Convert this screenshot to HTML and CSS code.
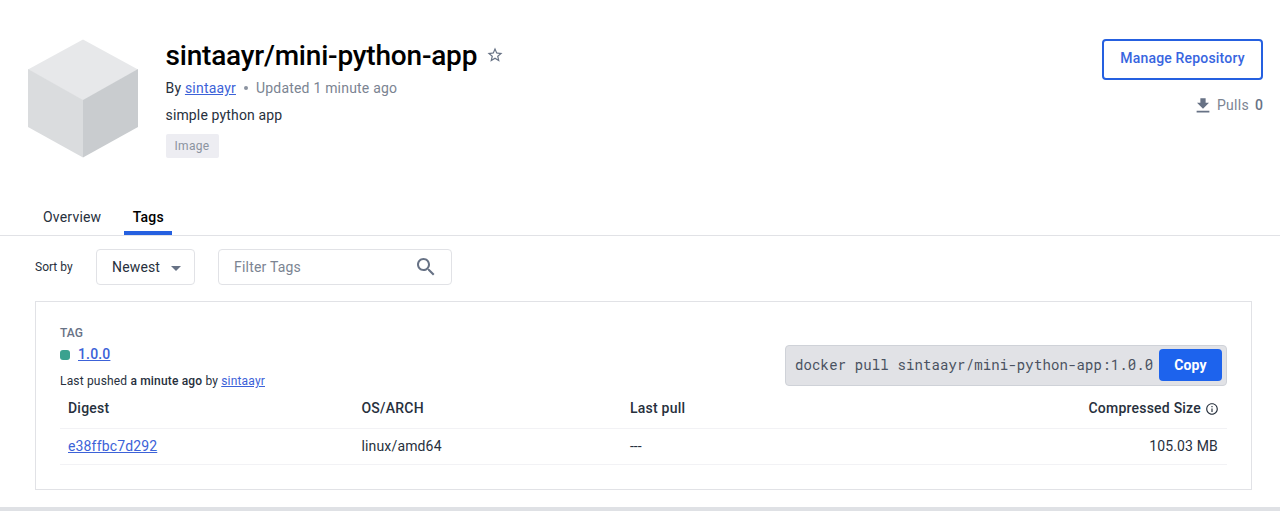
FILE: index.html
```html
<!DOCTYPE html>
<html lang="en">
<head>
<meta charset="utf-8">
<title>sintaayr/mini-python-app</title>
<link rel="stylesheet" href="styles.css">
</head>
<body>
<div class="page">
  <header class="repo">
    <svg class="cube" width="112" height="120" viewBox="0 0 112 120" aria-hidden="true">
      <path fill="#e7e8ea" d="M56 .5 111 30.500 56 61.500 1 30.500z"/>
      <path fill="#dadcde" d="M1 30 56 61V118.500L1 88z"/>
      <path fill="#c9cccf" d="M111 30 56 61V118.500L111 88z"/>
    </svg>
    <div class="info">
      <div class="title-row">
        <h1 class="title">sintaayr/mini-python-app</h1>
        <svg class="star" width="18" height="18" viewBox="0 0 24 24" aria-hidden="true"><path fill="#677285" d="M22 9.240l-7.190-.62L12 2 9.190 8.630 2 9.240l5.460 4.730L5.820 21 12 17.270 18.180 21l-1.630-7.030L22 9.240zM12 15.400l-3.760 2.270 1-4.280-3.320-2.880 4.380-.38L12 6.100l1.710 4.040 4.380.38-3.320 2.880 1 4.280L12 15.400z"/></svg>
      </div>
      <div class="byline">By <a class="link" href="#">sintaayr</a><span class="dot"></span><span class="muted">Updated 1 minute ago</span></div>
      <div class="desc">simple python app</div>
      <span class="chip">Image</span>
    </div>
    <div class="actions">
      <button class="manage">Manage Repository</button>
      <div class="pulls">
        <svg width="18" height="18" viewBox="0 0 24 24" aria-hidden="true"><path fill="#677285" d="M20 9h-4.500V3h-7v6H4l8 8 8-8zM3.500 19.500v2.500h17v-2.500z"/></svg>
        <span>Pulls</span><b class="count">0</b>
      </div>
    </div>
  </header>
  <nav class="tabs">
    <a class="tab">Overview</a>
    <a class="tab active">Tags</a>
  </nav>
  <div class="toolbar">
    <span class="sort-label">Sort by</span>
    <div class="select"><span>Newest</span><i class="caret"></i></div>
    <div class="search"><span>Filter Tags</span>
      <svg width="24" height="24" viewBox="0 0 24 24" aria-hidden="true"><path fill="#677285" d="M15.500 14h-.79l-.28-.27C15.410 12.590 16 11.110 16 9.500 16 5.910 13.090 3 9.500 3S3 5.910 3 9.500 5.910 16 9.500 16c1.610 0 3.090-.59 4.230-1.570l.27.28v.79l5 4.990L20.490 19l-4.990-5zm-6 0C7.010 14 5 11.990 5 9.500S7.010 5 9.500 5 14 7.010 14 9.500 11.990 14 9.500 14z"/></svg>
    </div>
  </div>
  <section class="card">
    <div class="card-head">
      <div class="tag-info">
        <div class="tag-label">TAG</div>
        <div class="tag-name"><i class="status"></i><a class="link" href="#">1.0.0</a></div>
        <div class="pushed">Last pushed <b>a minute ago</b> by <a class="link" href="#">sintaayr</a></div>
      </div>
      <div class="command"><code class="code">docker pull sintaayr/mini-python-app:1.0.0</code><button class="copy">Copy</button></div>
    </div>
    <div class="row head"><span>Digest</span><span>OS/ARCH</span><span>Last pull</span>
      <span class="size"><span class="size-text">Compressed Size</span><svg width="14" height="14" viewBox="0 0 24 24" aria-hidden="true"><path fill="#27303d" d="M11 7h2v2h-2zm0 4h2v6h-2zm1-9C6.480 2 2 6.480 2 12s4.480 10 10 10 10-4.480 10-10S17.520 2 12 2zm0 18c-4.410 0-8-3.590-8-8s3.590-8 8-8 8 3.590 8 8-3.590 8-8 8z"/></svg></span>
    </div>
    <div class="row"><span><a class="link" href="#">e38ffbc7d292</a></span><span>linux/amd64</span><span class="dashes">---</span><span class="size mb">105.03 MB</span></div>
  </section>
  <footer class="footer"></footer>
</div>
</body>
</html>
```
FILE: styles.css
```css
* { box-sizing: border-box; }
body {
  margin: 0;
  background: #fff;
  color: #27303d;
  font: 14px/20px Roboto, sans-serif;
  letter-spacing: 0.15px;
}
button { font: inherit; letter-spacing: inherit; padding: 0; }
.page { height: 511px; display: flex; flex-direction: column; overflow: hidden; }
.link { color: #3c62d8; text-decoration: underline; text-underline-offset: 1px; }
.muted { color: #7b8492; }

.repo { height: 199px; display: flex; align-items: flex-start; padding: 39px 17px 0 27px; }
.cube { flex: none; }
.info { flex: 1; margin-left: 26.5px; }
.title-row { display: flex; align-items: center; height: 34px; gap: 9px; }
.title { margin: 0; color: #000; font-size: 28px; font-weight: 500; line-height: 34px; letter-spacing: -0.2px; white-space: nowrap; }
.star { margin-bottom: 2px; }
.byline { margin-top: 5px; letter-spacing: 0.2px; display: flex; align-items: center; white-space: pre; }
.dot { width: 4px; height: 4px; margin: 0 8px; border-radius: 50%; background: #8b93a0; }
.desc { margin-top: 7px; line-height: 20px; letter-spacing: 0.15px; }
.chip {
  display: block; width: 53px; height: 24px; margin-top: 9px;
  border-radius: 2px; background: #ededf2; color: #8b93a0;
  font-size: 12px; line-height: 24px; text-align: center; letter-spacing: 0.35px;
}
.actions { display: flex; flex-direction: column; align-items: flex-end; }
.manage {
  width: 161px; height: 41px; padding-bottom: 4px;
  border: 2px solid #2560e0; border-radius: 4px; background: #fff;
  color: #3765df; font-weight: 500; letter-spacing: 0.18px;
}
.pulls { display: flex; align-items: center; margin-top: 15px; color: #7b8492; letter-spacing: 0.3px; }
.pulls svg { margin-right: 5px; }
.count { margin-left: 6px; font-weight: 500; letter-spacing: 0; color: #677285; }

.tabs { display: flex; height: 37px; padding-left: 33px; border-bottom: 1px solid #e1e2e6; gap: 13px; }
.tab { height: 36px; padding: 8px 10px 0; letter-spacing: 0.2px; }
.tab.active { width: 48px; padding: 8px 0 0; text-align: center; color: #000; font-weight: 500; border-bottom: 4px solid #2560e0; }

.toolbar { display: flex; align-items: center; height: 36px; margin: 13px 0 0 35px; }
.sort-label { width: 61px; font-size: 12px; letter-spacing: 0; }
.select, .search { display: flex; align-items: center; justify-content: space-between; height: 36px; border: 1px solid #e1e2e6; border-radius: 4px; }
.select { width: 99px; padding: 0 13px 0 15px; letter-spacing: 0.15px; }
.select span { padding-bottom: 1px; }
.caret { border: 5px solid transparent; border-top-color: #677285; border-bottom: 0; margin-top: 2px; }
.search { width: 234px; margin-left: 23px; padding: 0 13px 0 15px; color: #7b8492; letter-spacing: 0.2px; }
.search span { padding-bottom: 1px; }

.card { height: 189px; margin: 16px 28px 0 35px; padding: 22px 24px 0; border: 1px solid #e1e2e6; }
.card-head { display: flex; justify-content: space-between; height: 66px; }
.tag-label { color: #677285; font-size: 12px; font-weight: 500; line-height: 18px; letter-spacing: 0; }
.tag-name { display: flex; align-items: center; height: 24px; font-weight: 500; }
.status { width: 10px; height: 10px; margin: 1px 8px 0 0; border-radius: 3px; background: #3ba28f; }
.pushed { margin-top: 6px; font-size: 12px; line-height: 18px; letter-spacing: 0.17px; }
.pushed b { font-weight: 500; }
.command { display: flex; align-items: center; width: 442px; height: 41px; margin-top: 21px; padding: 0 3px 1px 9px; border: 1px solid #cfd2d8; border-radius: 4px; background: #e1e2e6; }
.code { width: 364px; padding-bottom: 1px; font: 14px/20px "Roboto Mono", "DejaVu Sans Mono", monospace; letter-spacing: 0.13px; white-space: nowrap; color: #4a5261; }
.copy { width: 63px; height: 32px; padding-bottom: 1px; border: 0; border-radius: 4px; background: #1d63ed; color: #fff; font-weight: 700; }
.row { display: grid; grid-template-columns: 293.500px 268.500px 1fr 1fr; align-items: center; height: 36px; padding: 0 9px 1px 8px; border-bottom: 1px solid #f2f2f5; letter-spacing: 0.15px; }
.row.head { height: 39px; padding-bottom: 3px; font-weight: 500; letter-spacing: 0.22px; }
.size { display: flex; align-items: center; justify-content: flex-end; }
.size svg { margin: 2px -1px 0 4px; }
.dashes { letter-spacing: 0; }
.footer { height: 4px; margin-top: auto; background: #dfe1e5; }
```
